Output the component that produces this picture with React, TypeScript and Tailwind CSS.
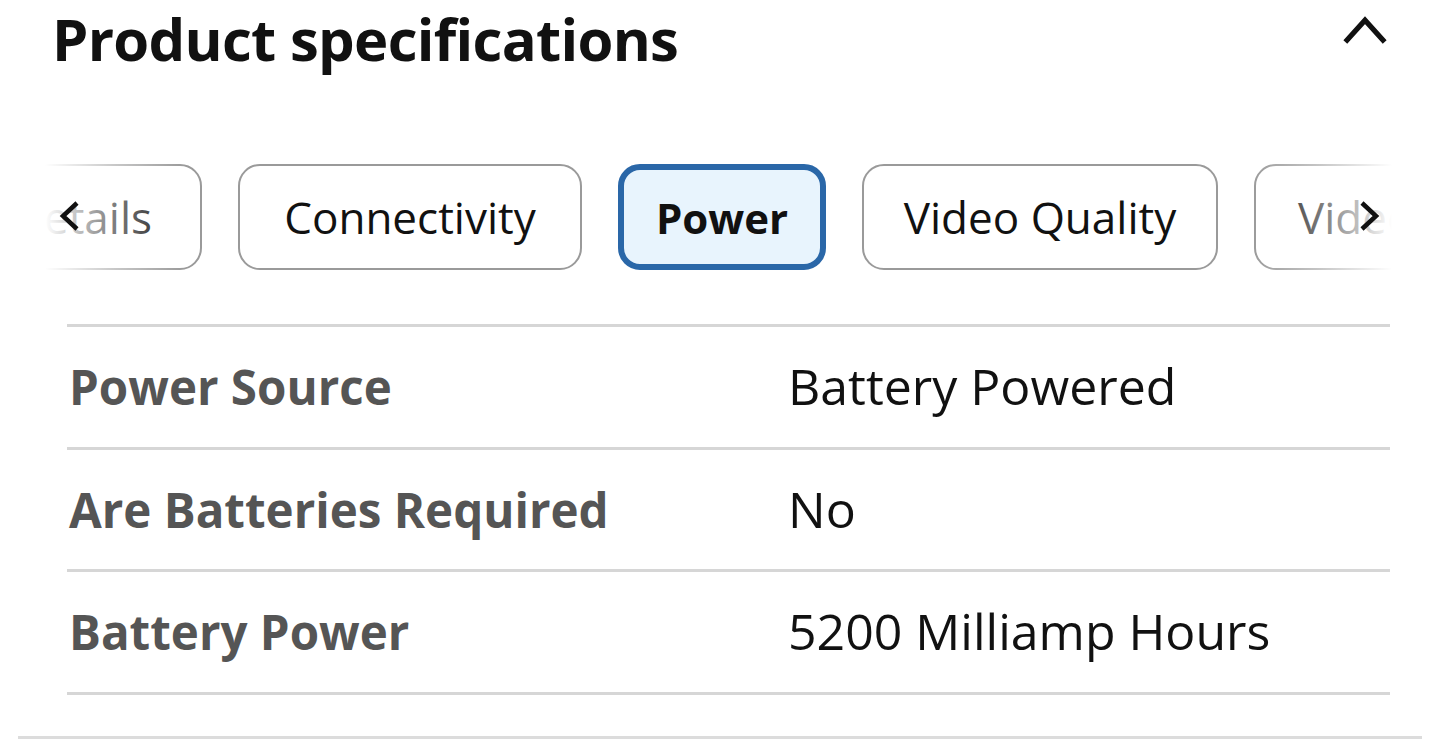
import { useState } from 'react';

const tabs = [
  { label: 'Details', width: 'w-[240px]' },
  { label: 'Connectivity', width: 'w-[344px]' },
  { label: 'Power', width: 'w-[208px]' },
  { label: 'Video Quality', width: 'w-[356px]' },
  { label: 'Video Features', width: 'w-[400px]' },
];

const rows = [
  { name: 'Power Source', value: 'Battery Powered' },
  { name: 'Are Batteries Required', value: 'No' },
  { name: 'Battery Power', value: '5200 Milliamp Hours' },
];

function Chevron({ dir }: { dir: 'left' | 'right' | 'up' }) {
  const d =
    dir === 'up' ? 'M3 25 L22 4 L41 25' : dir === 'left' ? 'M18 3 L4 16 L18 29' : 'M4 3 L18 16 L4 29';
  return (
    <svg
      viewBox={dir === 'up' ? '0 0 44 28' : '0 0 22 32'}
      className={dir === 'up' ? 'w-[46px] h-[29px]' : 'w-[22px] h-[32px]'}
      fill="none"
      stroke="#111"
      strokeWidth={dir === 'up' ? 5 : 4.5}
    >
      <path d={d} />
    </svg>
  );
}

export default function App() {
  const [active, setActive] = useState('Power');

  return (
    <div
      className="w-[1440px] h-[739px] bg-white overflow-hidden flex flex-col"
      style={{ fontFamily: '"Open Sans", "Noto Sans", sans-serif' }}
    >
      <div className="flex items-start justify-between pl-[52px] pr-[52px] pt-[2px]">
        <h2 className="text-[58px] leading-[74px] font-bold text-[#111] tracking-[-0.7px]">
          Product specifications
        </h2>
        <button className="mt-[14px]">
          <Chevron dir="up" />
        </button>
      </div>

      <div className="relative mt-[86px] ml-[45px] w-[1347px] h-[110px] overflow-hidden">
        <div className="flex gap-[36px] ml-[-83px] h-full items-center">
          {tabs.map((t) => {
            const on = t.label === active;
            return (
              <button
                key={t.label}
                onClick={() => setActive(t.label)}
                className={
                  on
                    ? `${t.width} shrink-0 h-[106px] rounded-[22px] border-[6px] border-[#2a67a8] bg-[#e8f4fd] text-[42px] font-bold text-[#111]`
                    : `${t.width} shrink-0 h-[106px] rounded-[22px] border-[2.5px] border-[#9a9a9a] bg-white text-[44px] text-[#111] ${t.label === 'Video Features' ? 'text-left px-[42px]' : ''}`
                }
              >
                <span className="whitespace-nowrap">{t.label}</span>
              </button>
            );
          })}
        </div>
        <div className="absolute left-0 top-0 h-full w-[140px] bg-gradient-to-r from-white via-white/45 to-transparent" />
        <div className="absolute right-0 top-0 h-full w-[140px] bg-gradient-to-l from-white via-white/45 to-transparent" />
        <div className="absolute left-[14px] top-[38px]">
          <Chevron dir="left" />
        </div>
        <div className="absolute right-[12px] top-[38px]">
          <Chevron dir="right" />
        </div>
      </div>

      <div className="mt-[52px] ml-[67px] w-[1323px] border-t-[3px] border-[#d6d6d6]">
        {rows.map((r) => (
          <div key={r.name} className="flex items-center h-[122.5px] border-b-[3px] border-[#d6d6d6]">
            <div className="w-[721px] pl-[2px] text-[47.5px] font-bold text-[#555]">{r.name}</div>
            <div className="text-[50px] text-[#111]">{r.value}</div>
          </div>
        ))}
      </div>

      <div className="mt-auto mx-[18px] border-b-[3px] border-[#dcdcdc]" />
    </div>
  );
}
